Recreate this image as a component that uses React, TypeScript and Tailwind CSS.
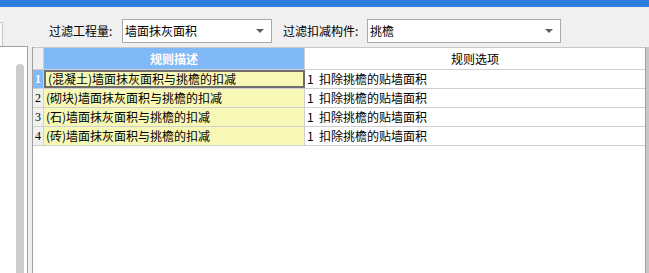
import React from 'react';

const rows = [
  { desc: '(混凝土)墙面抹灰面积与挑檐的扣减', opt: '1  扣除挑檐的贴墙面积' },
  { desc: '(砌块)墙面抹灰面积与挑檐的扣减', opt: '1  扣除挑檐的贴墙面积' },
  { desc: '(石)墙面抹灰面积与挑檐的扣减', opt: '1  扣除挑檐的贴墙面积' },
  { desc: '(砖)墙面抹灰面积与挑檐的扣减', opt: '1  扣除挑檐的贴墙面积' },
];

function Combo({ value, className = '' }: { value: string; className?: string }) {
  return (
    <div
      className={`h-[24px] flex items-center justify-between bg-white border border-[#a9a9a9] pl-[2px] pr-[7px] ${className}`}
    >
      <span className="text-[12px] text-black leading-none">{value}</span>
      <span className="w-0 h-0 border-l-[4px] border-r-[4px] border-t-[4px] border-l-transparent border-r-transparent border-t-[#606060]" />
    </div>
  );
}

export default function App() {
  return (
    <div
      className="w-[649px] h-[273px] overflow-hidden bg-[#f0f0f0] flex flex-col text-[12px] text-black"
      style={{ fontFamily: '"Noto Sans CJK SC", "Noto Sans", sans-serif' }}
    >
      {/* title strip */}
      <div className="h-[7px] bg-[#2c7fdd] shrink-0" />

      {/* filter toolbar */}
      <div className="h-[39px] shrink-0 flex items-start relative">
        <div className="absolute left-0 top-[15px] w-[3px] h-[24px] bg-[#f9f9f9] border-t border-r border-[#c8c8c8] rounded-tr-[2px]" />
        <div className="flex items-center mt-[12px] ml-[49px]">
          <span className="w-[73px] leading-none">过滤工程量:</span>
          <Combo value="墙面抹灰面积" className="w-[150px]" />
          <span className="ml-[11px] w-[84px] leading-none">过滤扣减构件:</span>
          <Combo value="挑檐" className="w-[194px]" />
        </div>
      </div>

      {/* body */}
      <div className="flex-1 flex min-h-0">
        {/* left tree panel */}
        <div className="w-[28px] bg-white border-t border-r border-[#a0a0a0] flex flex-col">
          <div className="ml-[16px] mt-[17px] w-[8px] flex-1 bg-[#cdcdcd] rounded-t-[4px]" />
        </div>
        <div className="w-[4px] bg-[#f0f0f0]" />

        {/* grid */}
        <div className="flex-1 flex flex-col border-l border-[#a0a0a0] mt-[1px]">
          <div className="flex-1 flex min-h-0">
            <div className="flex-1 bg-white border-t border-[#c8c8c8] flex flex-col">
              {/* header */}
              <div className="flex h-[22px] border-b border-[#d0d0d0]">
                <div className="w-[11px] bg-[#f0f0f0] border-r border-[#d0d0d0]" />
                <div className="w-[261px] bg-[#80b9f6] border-r border-[#d0d0d0] flex items-center justify-center text-white font-bold">
                  规则描述
                </div>
                <div className="flex-1 flex items-center justify-center">规则选项</div>
              </div>
              {rows.map((r, i) => (
                <div key={i} className="flex h-[19px] border-b border-[#d0d0d0]">
                  <div
                    className={`w-[11px] border-r border-[#d0d0d0] flex items-center justify-center text-[12px] ${
                      i === 0 ? 'bg-[#80b9f6] text-white font-bold' : 'bg-[#f0f0f0] text-black'
                    }`}
                    style={{ fontFamily: '"Liberation Serif", serif' }}
                  >
                    {i + 1}
                  </div>
                  <div
                    className={`w-[261px] bg-[#f8f8b6] flex items-center pl-[2px] whitespace-nowrap ${
                      i === 0 ? 'border-2 border-[#6e6e6e]' : 'border-r border-[#d0d0d0]'
                    }`}
                  >
                    {r.desc}
                  </div>
                  <div className="flex-1 flex items-center pl-[2px] whitespace-pre">{r.opt}</div>
                </div>
              ))}
            </div>
            <div className="w-[4px] border-l border-[#a0a0a0] bg-[#c8c8c8]" />
          </div>
        </div>
      </div>
    </div>
  );
}
